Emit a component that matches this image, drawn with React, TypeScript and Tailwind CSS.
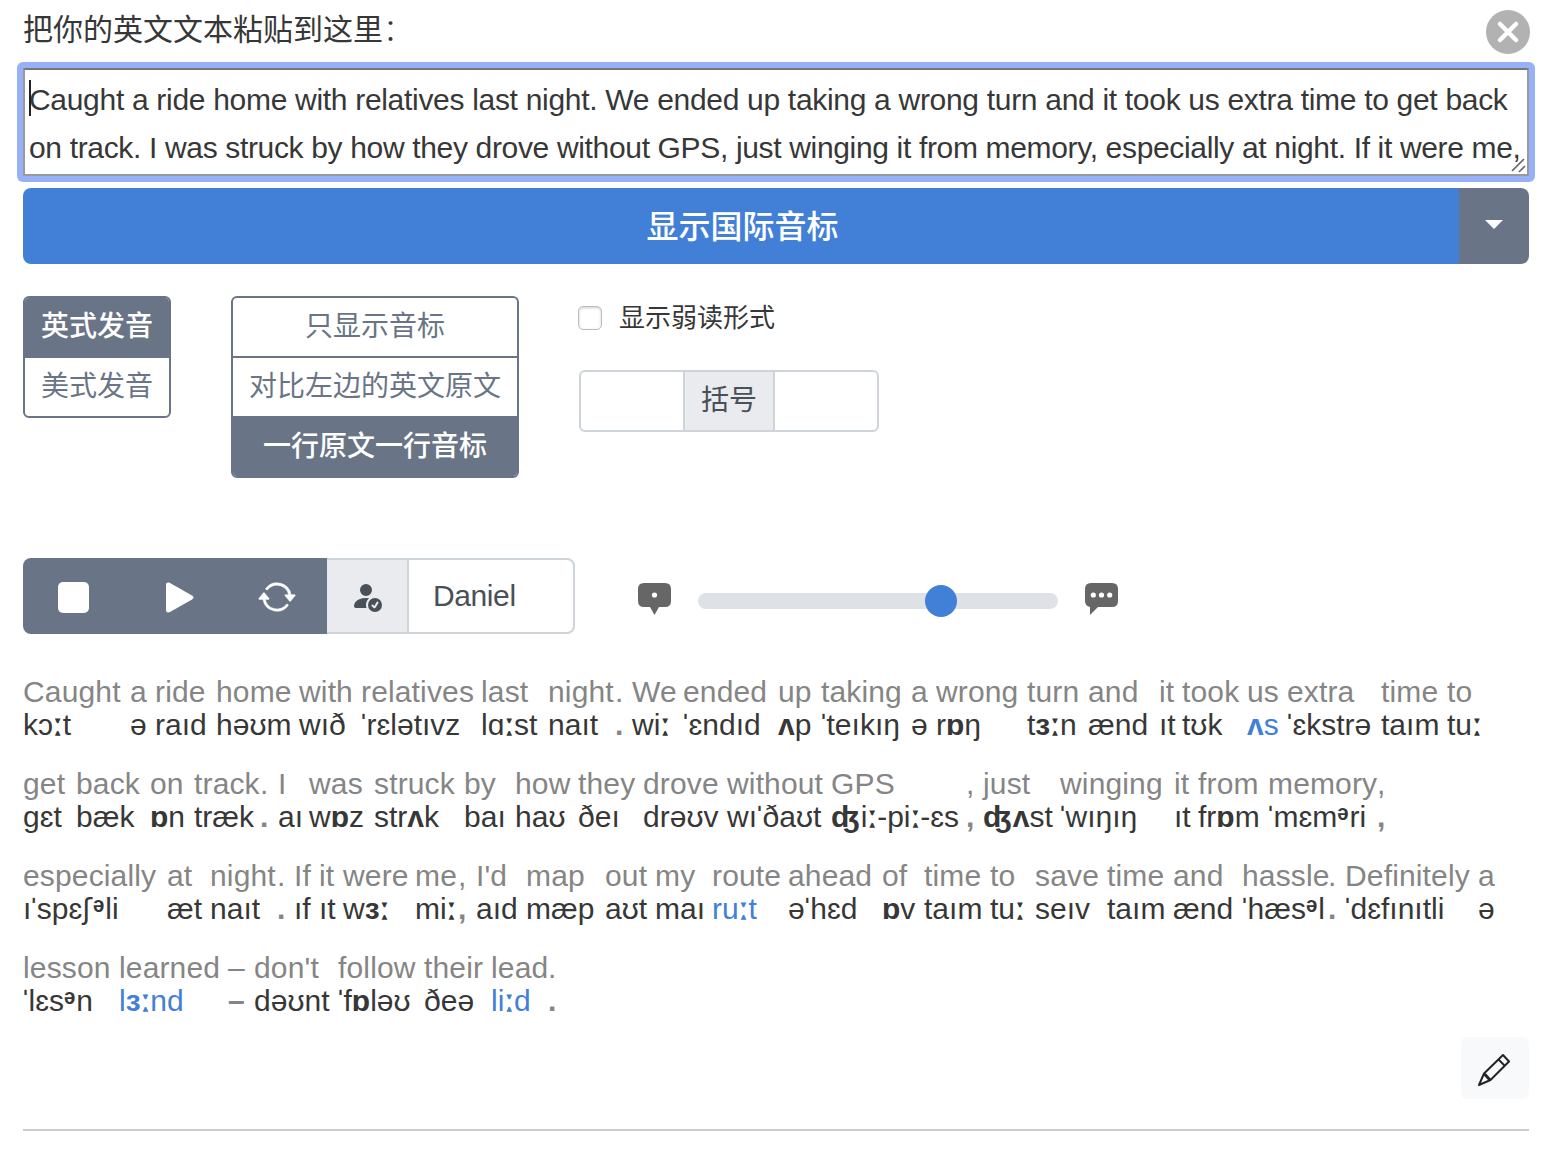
import React from "react";
import { BsArrowRepeat, BsPersonFillCheck } from "react-icons/bs";

type Token = [x: number, source: string, ipa: string, linked?: boolean];

// Each row lists its words with the left edge of the column they open.
const rows: { end: number; tokens: Token[] }[] = [
  {
    end: 1500,
    tokens: [
      [23, "Caught", "kɔːt"], [130, "a", "ə"], [155, "ride", "raıd"], [216, "home", "həʊm"], [299, "with", "wıð"],
      [361, "relatives", "ˈrɛlətıvz"], [481, "last", "lɑːst"], [548, "night", "naıt"], [615, ".", "."], [632, "We", "wiː"],
      [683, "ended", "ˈɛndıd"], [778, "up", "ʌp"], [821, "taking", "ˈteıkıŋ"], [911, "a", "ə"], [936, "wrong", "rɒŋ"],
      [1027, "turn", "tɜːn"], [1088, "and", "ænd"], [1159, "it", "ıt"], [1182, "took", "tʊk"], [1247, "us", "ʌs", true],
      [1287, "extra", "ˈɛkstrə"], [1381, "time", "taım"], [1447, "to", "tuː"],
    ],
  },
  {
    end: 1500,
    tokens: [
      [23, "get", "gɛt"], [76, "back", "bæk"], [150, "on", "ɒn"], [194, "track", "træk"], [260, ".", "."], [278, "I", "aı"],
      [309, "was", "wɒz"], [374, "struck", "strʌk"], [464, "by", "baı"], [515, "how", "haʊ"], [578, "they", "ðeı"],
      [643, "drove", "drəʊv"], [727, "without", "wıˈðaʊt"], [831, "GPS", "ʤiː-piː-ɛs"], [966, ",", ","], [983, "just", "ʤʌst"],
      [1060, "winging", "ˈwıŋıŋ"], [1174, "it", "ıt"], [1198, "from", "frɒm"], [1268, "memory", "ˈmɛmᵊri"], [1377, ",", ","],
    ],
  },
  {
    end: 1510,
    tokens: [
      [23, "especially", "ıˈspɛʃᵊli"], [167, "at", "æt"], [210, "night", "naıt"], [277, ".", "."], [294, "If", "ıf"],
      [319, "it", "ıt"], [343, "were", "wɜː"], [415, "me", "miː"], [458, ",", ","], [476, "I'd", "aıd"], [526, "map", "mæp"],
      [605, "out", "aʊt"], [655, "my", "maı"], [712, "route", "ruːt", true], [788, "ahead", "əˈhɛd"], [882, "of", "ɒv"],
      [924, "time", "taım"], [990, "to", "tuː"], [1035, "save", "seıv"], [1107, "time", "taım"], [1173, "and", "ænd"],
      [1242, "hassle", "ˈhæsᵊl"], [1328, ".", "."], [1345, "Definitely", "ˈdɛfınıtli"], [1478, "a", "ə"],
    ],
  },
  {
    end: 600,
    tokens: [
      [23, "lesson", "ˈlɛsᵊn"], [119, "learned", "lɜːnd", true], [228, "–", "–"], [254, "don't", "dəʊnt"],
      [338, "follow", "ˈfɒləʊ"], [424, "their", "ðeə"], [491, "lead", "liːd", true], [548, ".", "."],
    ],
  },
];

const glyphStyles: Record<string, string> = {
  "ʌ": "font-bold",
  "ɒ": "font-bold",
  "ɜ": "font-bold",
  "ʤ": "font-bold tracking-[1.5px]",
  "ᵊ": "font-bold tracking-[1px]",
  "ː": "ml-[0.6px] tracking-[0.8px] [-webkit-text-stroke:1.6px_currentColor]",
  "ˈ": "-ml-[2.5px] tracking-[-2px] font-bold",
  "ʃ": "font-['DejaVu_Sans'] text-[29px] leading-none tracking-[1px] font-normal",
};

function Ipa({ text }: { text: string }) {
  return (
    <>
      {[...text].map((c, i) =>
        glyphStyles[c] ? (
          <span key={i} className={glyphStyles[c]}>{c}</span>
        ) : (
          <React.Fragment key={i}>{c}</React.Fragment>
        ),
      )}
    </>
  );
}

function Word({ token, width }: { token: Token; width: number }) {
  const [, source, ipa, linked] = token;
  const mark = source === ipa && /[.,–]/.test(ipa);
  return (
    <span className="flex shrink-0 flex-col whitespace-nowrap" style={{ width }}>
      <span className="h-[33px] tracking-[0.15px] text-[#858585]">{source}</span>
      <span className={mark ? "h-[33px] font-bold text-[#858585]" : linked ? "h-[33px] text-[#4280d8]" : "h-[33px] text-[#373737]"}>
        {mark ? ipa : <Ipa text={ipa} />}
      </span>
    </span>
  );
}

export default function App() {
  return (
    <main className="h-[1154px] w-[1568px] overflow-hidden bg-white px-[23px] pt-[10px] font-['Liberation_Sans','Noto_Sans_CJK_SC',sans-serif] text-[#373737]">
      <header className="flex h-[52px] w-[1507px] items-start justify-between">
        <h1 className="text-[30px] leading-[40px] font-normal">把你的英文文本粘贴到这里<span className="font-light">：</span></h1>
        <svg viewBox="0 0 44 44" className="size-11">
          <circle cx="22" cy="22" r="22" fill="#b2b2b2" />
          <path d="M14 14 30 30M30 14 14 30" stroke="#fff" strokeWidth="4.500" strokeLinecap="round" />
        </svg>
      </header>

      <div className="-mx-[6px] w-[1518px] rounded-[6px] bg-[#96b1f7] p-[6px]">
        <div className="relative h-[108px] border-2 border-[#999] border-t-[#767676] bg-white pt-[6px] pl-1 text-[30px] leading-[48px] whitespace-nowrap">
          <p className="tracking-[-0.305px]">Caught a ride home with relatives last night. We ended up taking a wrong turn and it took us extra time to get back</p>
          <p className="tracking-[-0.34px]">on track. I was struck by how they drove without GPS, just winging it from memory, especially at night. If it were me,</p>
          <span className="absolute top-[10px] left-1 h-9 w-[2px] bg-[#222]" />
          <svg viewBox="0 0 16 16" className="absolute right-[1px] bottom-[1px] size-4">
            <path d="M2 14 14 2M9 15 15 9" stroke="#666" strokeWidth="1.700" />
          </svg>
        </div>
      </div>

      <div className="mt-[6px] flex h-[76px] w-[1506px] overflow-hidden rounded-lg text-white">
        <button className="h-full w-[1436px] bg-[#4280d8] pt-[2px] pl-[3px] text-[32px] leading-[74px] font-medium">显示国际音标</button>
        <button className="flex flex-1 items-center justify-center bg-[#697586]">
          <svg viewBox="0 0 18 9" className="mr-px mb-[3px] h-[9px] w-[18px]"><path d="M0 0H18L9 9Z" fill="#fff" /></svg>
        </button>
      </div>

      <section className="mt-8 flex h-[262px] items-start text-[28px] leading-[58px] text-[#697586]">
        <div className="flex w-[148px] flex-col overflow-hidden rounded-[6px] border-2 border-[#697586] text-center">
          <span className="h-[60px] bg-[#697586] font-medium text-white">英式发音</span>
          <span className="h-[58px]">美式发音</span>
        </div>
        <div className="ml-[60px] flex w-[288px] flex-col overflow-hidden rounded-[6px] border-2 border-[#697586] text-center">
          <span className="h-[60px] border-b-2 border-[#697586]">只显示音标</span>
          <span className="h-[58px]">对比左边的英文原文</span>
          <span className="h-[60px] bg-[#697586] pt-[2px] font-medium text-white">一行原文一行音标</span>
        </div>
        <div className="ml-[59px] flex flex-col">
          <label className="flex h-[42px] items-center text-[26px] text-[#373737]">
            <span className="mt-[2px] mr-[17px] size-6 rounded-[5px] border border-[#bdbdbd] shadow-[inset_0_1px_3px_#ccc]" />
            <span className="pt-px">显示弱读形式</span>
          </label>
          <div className="mt-8 ml-px flex h-[62px] w-[300px] overflow-hidden rounded-[6px] border-2 border-[#ced4da]">
            <span className="w-[102px]" />
            <span className="w-[92px] border-x-2 border-[#ced4da] bg-[#e9ebef] text-center text-[#495057]">括号</span>
          </div>
        </div>
      </section>

      <section className="flex h-[76px] items-center">
        <div className="flex h-full w-[304px] items-center rounded-l-lg bg-[#697586] pt-[2px] text-white">
          <svg viewBox="0 0 31 31" className="ml-[35px] size-[31px]"><rect width="31" height="31" rx="5" fill="#fff" /></svg>
          <svg viewBox="0 0 28 31" className="ml-[77px] h-[31px] w-7">
            <path d="M0 3C0 .5 2 0 4 1L26 13.500Q29 15.500 26 17.500L4 30C2 31 0 30.500 0 28Z" fill="#fff" />
          </svg>
          <BsArrowRepeat className="ml-[64px] size-[38px] [stroke-width:0.2]" />
        </div>
        <div className="flex h-full w-20 items-center border-y-2 border-[#ced4da] bg-[#e9ebef]">
          <BsPersonFillCheck className="ml-[23px] size-8 text-[#495057]" />
        </div>
        <div className="h-full w-[168px] rounded-r-lg border-2 border-[#ced4da] pl-6 text-[30px] leading-[72px] tracking-[-0.4px] text-[#495057]">Daniel</div>
        <svg viewBox="0 0 33 32" className="mt-[6px] ml-[63px] h-8 w-[33px]">
          <path d="M6 0H27Q33 0 33 6V18Q33 24 27 24H21L16.500 32 12 24H6Q0 24 0 18V6Q0 0 6 0Z" fill="#666" />
          <circle cx="16.500" cy="12" r="2.600" fill="#fff" />
        </svg>
        <div className="relative mt-[10px] ml-[27px] h-4 w-[360px] rounded-full bg-[#dee2e6]">
          <span className="absolute -top-2 left-[227px] size-8 rounded-full bg-[#4280d8]" />
        </div>
        <svg viewBox="0 0 33 32" className="mt-[6px] ml-[27px] h-8 w-[33px]">
          <path d="M6 0H27Q33 0 33 6V18Q33 24 27 24H13L5 32V24Q0 23 0 18V6Q0 0 6 0Z" fill="#666" />
          <circle cx="8.300" cy="12" r="2.600" fill="#fff" />
          <circle cx="16.500" cy="12" r="2.600" fill="#fff" />
          <circle cx="24.700" cy="12" r="2.600" fill="#fff" />
        </svg>
      </section>

      <section className="mt-[41px] flex flex-col gap-[26px] text-[30px] leading-[33px]">
        {rows.map(({ end, tokens }, r) => (
          <div key={r} className="flex h-[66px]">
            {tokens.map((token, i) => (
              <Word key={i} token={token} width={(tokens[i + 1]?.[0] ?? end) - token[0]} />
            ))}
          </div>
        ))}
      </section>

      <footer className="mt-[20px] flex h-[94px] w-[1506px] items-start justify-end border-b-2 border-[#ccc]">
        <button className="flex h-[62px] w-[68px] items-center justify-center rounded-[6px] bg-[#f8f9fa]">
          <svg viewBox="0 0 32 32" className="mt-1 mr-[2px] size-8" fill="none" stroke="#212529" strokeWidth="2" strokeLinejoin="round">
            <path d="M25 1 31 7.500 12.500 26 1 31 6 19.500Z" />
            <path d="M20.500 5.500 26.500 11.500" />
            <path d="M6.500 20 12 26" strokeWidth="3" />
          </svg>
        </button>
      </footer>
    </main>
  );
}
